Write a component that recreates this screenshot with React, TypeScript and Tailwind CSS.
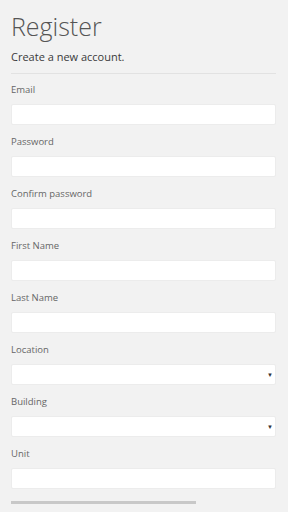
import React from "react";

const fields = [
  { label: "Email", type: "input" },
  { label: "Password", type: "input" },
  { label: "Confirm password", type: "input" },
  { label: "First Name", type: "input" },
  { label: "Last Name", type: "input" },
  { label: "Location", type: "select" },
  { label: "Building", type: "select" },
  { label: "Unit", type: "input" },
];

const Field = ({ label, type }: { label: string; type: string }) => (
  <div className="flex flex-col">
    <label className="h-[14px] text-[9.5px] leading-[14px] text-[#666]">{label}</label>
    <div className="mt-[7px] flex h-[21px] items-center justify-end rounded-[2px] border border-[#ececec] bg-white pr-[2px]">
      {type === "select" && <span className="text-[6px] leading-none text-[#333]">▼</span>}
    </div>
  </div>
);

export default function App() {
  return (
    <div
      className="h-[512px] w-[288px] overflow-hidden bg-[#f2f2f2] pl-[11px] pr-[12px]"
      style={{ fontFamily: '"Open Sans", sans-serif' }}
    >
      <h1 className="pt-[10px] text-[25px] font-light leading-[32px] text-[#555]">Register</h1>
      <p className="mt-[7px] text-[11px] leading-[15px] text-[#3a3a3a]">Create a new account.</p>
      <div className="mt-[9px] border-t border-[#e2e2e2]" />
      <div className="mt-[9px] flex flex-col gap-[10px]">
        {fields.map((f) => (
          <Field key={f.label} label={f.label} type={f.type} />
        ))}
      </div>
      <div className="mt-[12px] h-[3px] w-[185px] bg-[#c8c8c8]" />
      <p className="mt-[4px] text-[11px] font-semibold text-[#444]">Register as tenant</p>
    </div>
  );
}
